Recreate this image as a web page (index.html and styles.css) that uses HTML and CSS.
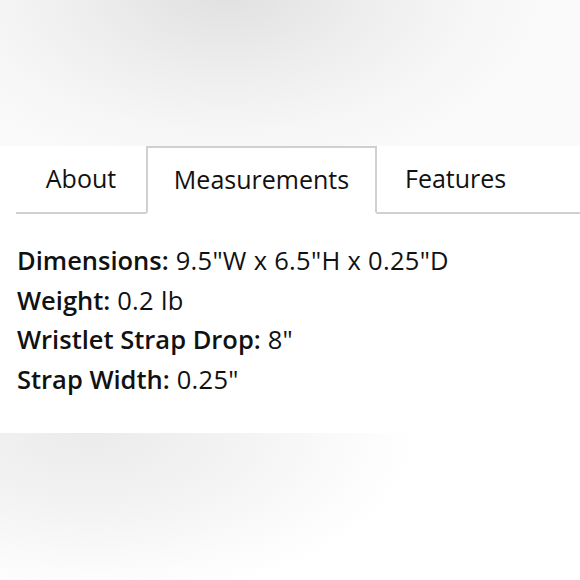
FILE: index.html
```html
<!DOCTYPE html>
<html>
<head>
<meta charset="utf-8">
<link rel="stylesheet" href="styles.css">
</head>
<body>
<div class="page">
  <div class="top-shade"></div>
  <div class="panel">
    <div class="tabs">
      <div class="tab tab-about">About</div>
      <div class="tab tab-active">Measurements</div>
      <div class="tab tab-features">Features</div>
    </div>
    <div class="specs">
      <p class="spec"><b>Dimensions:</b> 9.5"W x 6.5"H x 0.25"D</p>
      <p class="spec"><b>Weight:</b> 0.2 lb</p>
      <p class="spec"><b>Wristlet Strap Drop:</b> 8"</p>
      <p class="spec"><b>Strap Width:</b> 0.25"</p>
    </div>
  </div>
  <div class="bottom-shade"></div>
</div>
</body>
</html>
```
FILE: styles.css
```css
html, body {
  margin: 0;
  padding: 0;
  background: #ffffff;
}
.page {
  width: 580px;
  height: 580px;
  display: flex;
  flex-direction: column;
  overflow: hidden;
  font-family: "Open Sans", "Lato", sans-serif;
  color: #111111;
}
.top-shade {
  height: 146px;
  flex: none;
  background: radial-gradient(ellipse 330px 190px at 225px -10px, #e0e0e0 0%, #eeeeee 45%, #f6f6f6 75%, #fafafa 100%), #fafafa;
}
.panel {
  height: 287px;
  flex: none;
  background: #ffffff;
}
.tabs {
  display: flex;
  padding-left: 16px;
  height: 68px;
}
.tab {
  box-sizing: border-box;
  display: flex;
  align-items: center;
  justify-content: center;
  font-size: 25px;
  padding-bottom: 2px;
  border-bottom: 2px solid #d0d0d0;
}
.tab-about {
  width: 130px;
}
.tab-active {
  width: 231px;
  border: 2px solid #d0d0d0;
  border-bottom: 2px solid transparent;
  background: #ffffff;
}
.tab-features {
  flex: 1;
  justify-content: flex-start;
  padding-left: 28px;
}
.specs {
  padding: 27px 0 0 17px;
}
.spec {
  margin: 0;
  font-size: 25.5px;
  line-height: 39.5px;
  letter-spacing: 0.3px;
}
.spec b {
  font-weight: 600;
  letter-spacing: 0;
}
.bottom-shade {
  flex: 1;
  background: radial-gradient(ellipse 330px 170px at 90px 0px, #ebebeb 0%, #f3f3f3 45%, #fbfbfb 80%, #ffffff 100%), #ffffff;
}
```
